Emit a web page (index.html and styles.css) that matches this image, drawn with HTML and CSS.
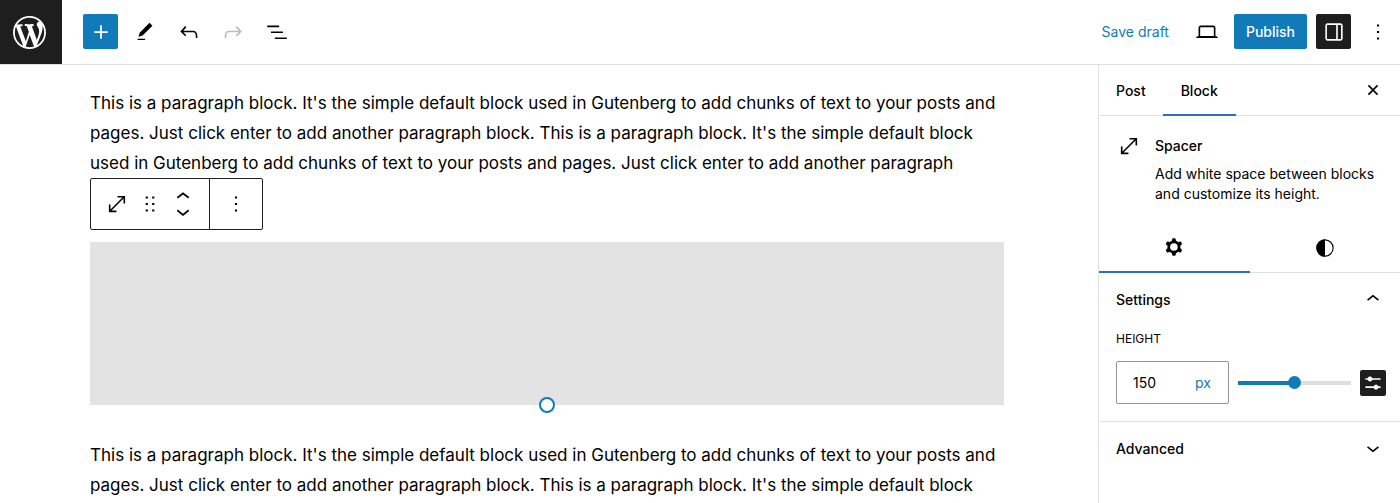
FILE: index.html
```html
<!DOCTYPE html>
<html lang="en">
<head>
    <meta charset="UTF-8">
    <title>Edit Post</title>
    <link rel="stylesheet" href="styles.css">
</head>
<body>
    <header class="header">
        <a href="#" class="site-logo" aria-label="View Posts">
            <svg viewBox="0 0 20 20"><path d="M20 10c0-5.51-4.49-10-10-10C4.48 0 0 4.49 0 10c0 5.52 4.48 10 10 10 5.51 0 10-4.48 10-10zM7.78 15.37L4.37 6.22c.55-.02 1.17-.08 1.17-.08.5-.06.44-1.13-.06-1.11 0 0-1.45.11-2.37.11-.18 0-.37 0-.58-.01C4.12 2.69 6.87 1.11 10 1.11c2.33 0 4.45.87 6.05 2.34-.68-.11-1.65.39-1.65 1.58 0 .74.45 1.36.9 2.1.35.61.55 1.36.55 2.46 0 1.49-1.4 5-1.4 5l-3.03-8.37c.54-.02.82-.17.82-.17.5-.05.44-1.25-.06-1.22 0 0-1.44.12-2.38.12-.87 0-2.33-.12-2.33-.12-.5-.03-.56 1.2-.06 1.22l.92.08 1.26 3.41zM17.41 10c.24-.64.74-1.87.43-4.25.7 1.29 1.05 2.71 1.05 4.25 0 3.29-1.73 6.24-4.4 7.78.97-2.59 1.94-5.2 2.92-7.78zM6.1 18.09C3.12 16.65 1.11 13.53 1.11 10c0-1.3.23-2.48.72-3.59C3.25 10.3 4.67 14.2 6.1 18.09zm4.03-6.63l2.58 6.98c-.86.29-1.76.45-2.71.45-.79 0-1.57-.11-2.29-.33.81-2.38 1.62-4.74 2.42-7.1z"/></svg>
        </a>
        <div class="header-tools">
            <button type="button" class="icon-button primary" aria-label="Add block">
                <svg class="icon icon-large" viewBox="0 0 24 24"><path d="M11.25 12.75v5h1.5v-5h5v-1.5h-5v-5h-1.5v5h-5v1.5z"/></svg>
            </button>
            <button type="button" class="icon-button" aria-label="Tools">
                <svg class="icon icon-small" viewBox="0 0 24 24"><path d="M20.1 5.1L16.9 2 6.2 12.7l-1.3 4.4 4.5-1.3L20.1 5.1zM4 20.8h8v-1.5H4v1.5z"/></svg>
            </button>
            <button type="button" class="icon-button" aria-label="Undo">
                <svg class="icon" viewBox="0 0 24 24"><path d="M18.3 11.7c-.6-.6-1.4-.9-2.3-.9H6.7l2.9-3.3-1.1-1-4.5 5L8.5 16l1-1-2.7-2.7H16c.5 0 .9.2 1.3.5 1 1 1 3.4 1 4.5v.3h1.5v-.2c0-1.5 0-4.3-1.5-5.7z"/></svg>
            </button>
            <button type="button" class="icon-button" aria-label="Redo" disabled>
                <svg class="icon" viewBox="0 0 24 24"><path d="M15.6 6.5l-1.1 1 2.9 3.3H8c-.9 0-1.7.3-2.3.9-1.4 1.5-1.4 4.2-1.4 5.6v.2h1.5v-.3c0-1.1 0-3.5 1-4.5.3-.3.7-.5 1.3-.5h9.2L14.5 15l1.1 1.1 4.6-4.6-4.6-5z"/></svg>
            </button>
            <button type="button" class="icon-button" aria-label="Document overview">
                <svg class="icon" viewBox="0 0 24 24"><path d="M3 6h11v1.5H3V6Zm3.5 5.5h11V13h-11v-1.5ZM21 17H10v1.5h11V17Z"/></svg>
            </button>
        </div>
        <div class="header-settings">
            <button type="button" class="save-draft">Save draft</button>
            <button type="button" class="icon-button view" aria-label="View">
                <svg class="icon" viewBox="0 0 24 24"><path d="M20.5 16h-.7V8c0-1.1-.9-2-2-2H6.2c-1.1 0-2 .9-2 2v8h-.7c-.8 0-1.5.7-1.5 1.5h20c0-.8-.7-1.5-1.5-1.5zM5.7 8c0-.3.2-.5.5-.5h11.6c.3 0 .5.2.5.5v7.6H5.7V8z"/></svg>
            </button>
            <button type="button" class="publish">Publish</button>
            <button type="button" class="icon-button pressed" aria-label="Settings">
                <svg class="icon" viewBox="0 0 24 24"><path d="M18 4H6c-1.1 0-2 .9-2 2v12c0 1.1.9 2 2 2h12c1.1 0 2-.9 2-2V6c0-1.1-.9-2-2-2zm-4 14.5H6c-.3 0-.5-.2-.5-.5V6c0-.3.2-.5.5-.5h8v13zm4.5-.5c0 .3-.2.5-.5.5h-2.5v-13H18c.3 0 .5.2.5.5v12z"/></svg>
            </button>
            <button type="button" class="icon-button" aria-label="Options">
                <svg class="icon" viewBox="0 0 24 24"><path d="M13 19h-2v-2h2v2zm0-6h-2v-2h2v2zm0-6h-2V5h2v2z"/></svg>
            </button>
        </div>
    </header>

    <div class="layout">
        <main class="canvas">
            <p>This is a paragraph block. It's the simple default block used in Gutenberg to add chunks of text to your posts and pages. Just click enter to add another paragraph block. This is a paragraph block. It's the simple default block used in Gutenberg to add chunks of text to your posts and pages. Just click enter to add another paragraph</p>

            <div class="block-toolbar">
                <div class="toolbar-group">
                    <button type="button" class="toolbar-button" aria-label="Spacer">
                        <svg class="icon" viewBox="0 0 24 24"><path d="M7 18h4.5v1.5h-7v-7H6V17L17 6h-4.5V4.5h7v7H18V7L7 18Z"/></svg>
                    </button>
                    <button type="button" class="toolbar-button" aria-label="Drag">
                        <svg class="icon" viewBox="0 0 24 24"><path d="M8 7h2V5H8v2zm0 6h2v-2H8v2zm0 6h2v-2H8v2zm6-14v2h2V5h-2zm0 8h2v-2h-2v2zm0 6h2v-2h-2v2z"/></svg>
                    </button>
                    <div class="movers">
                        <button type="button" class="mover" aria-label="Move up">
                            <svg viewBox="6 7 12 8"><path d="M6.5 12.4L12 8l5.5 4.4-.9 1.2L12 10l-4.5 3.6-1-1.2z"/></svg>
                        </button>
                        <button type="button" class="mover" aria-label="Move down">
                            <svg viewBox="6 9 12 8"><path d="M17.5 11.6L12 16l-5.5-4.4.9-1.2L12 14l4.5-3.6 1 1.2z"/></svg>
                        </button>
                    </div>
                </div>
                <div class="toolbar-group">
                    <button type="button" class="toolbar-button" aria-label="Options">
                        <svg class="icon" viewBox="0 0 24 24"><path d="M13 19h-2v-2h2v2zm0-6h-2v-2h2v2zm0-6h-2V5h2v2z"/></svg>
                    </button>
                </div>
            </div>

            <div class="spacer">
                <span class="resize-handle"></span>
            </div>

            <p>This is a paragraph block. It's the simple default block used in Gutenberg to add chunks of text to your posts and pages. Just click enter to add another paragraph block. This is a paragraph block. It's the simple default block</p>
        </main>

        <aside class="sidebar">
            <div class="sidebar-tabs">
                <button type="button" class="tab">Post</button>
                <button type="button" class="tab active">Block</button>
                <button type="button" class="close" aria-label="Close settings">
                    <svg class="icon" viewBox="0 0 24 24"><path d="M12 13.06l3.712 3.713 1.061-1.06L13.061 12l3.712-3.712-1.06-1.06L12 10.938 8.288 7.227l-1.061 1.06L10.939 12l-3.712 3.712 1.06 1.061L12 13.061z"/></svg>
                </button>
            </div>

            <div class="block-card">
                <svg class="icon" viewBox="0 0 24 24"><path d="M7 18h4.5v1.5h-7v-7H6V17L17 6h-4.5V4.5h7v7H18V7L7 18Z"/></svg>
                <div>
                    <h2>Spacer</h2>
                    <p>Add white space between blocks and customize its height.</p>
                </div>
            </div>

            <div class="inspector-tabs">
                <button type="button" class="inspector-tab active" aria-label="Settings">
                    <svg class="icon" viewBox="0 0 24 24"><path fill-rule="evenodd" d="M10.289 4.836A1 1 0 0111.275 4h1.306a1 1 0 01.987.836l.244 1.466c.787.26 1.503.679 2.108 1.218l1.393-.522a1 1 0 011.216.437l.653 1.13a1 1 0 01-.23 1.273l-1.148.944a6.025 6.025 0 010 2.435l1.149.946a1 1 0 01.23 1.272l-.653 1.13a1 1 0 01-1.216.437l-1.394-.522c-.605.54-1.32.958-2.108 1.218l-.244 1.466a1 1 0 01-.987.836h-1.306a1 1 0 01-.986-.836l-.244-1.466a5.995 5.995 0 01-2.108-1.218l-1.394.522a1 1 0 01-1.217-.436l-.653-1.131a1 1 0 01.23-1.272l1.149-.946a6.026 6.026 0 010-2.435l-1.148-.944a1 1 0 01-.23-1.272l.653-1.131a1 1 0 011.217-.437l1.393.522a5.994 5.994 0 012.108-1.218l.244-1.466zM15.4 12a3.5 3.5 0 11-7 0 3.5 3.5 0 017 0z"/></svg>
                </button>
                <button type="button" class="inspector-tab" aria-label="Styles">
                    <svg class="icon" viewBox="0 0 24 24"><circle cx="12" cy="12" r="7.5" fill="none" stroke="currentColor"/><path d="M12 4a8 8 0 0 0 0 16z"/></svg>
                </button>
            </div>

            <section class="panel">
                <button type="button" class="panel-toggle" aria-expanded="true">
                    Settings
                    <svg class="icon" viewBox="0 0 24 24"><path d="M6.5 12.4L12 8l5.5 4.4-.9 1.2L12 10l-4.5 3.6-1-1.2z"/></svg>
                </button>
                <label class="field-label" for="height">Height</label>
                <div class="height-control">
                    <div class="unit-input">
                        <input type="text" id="height" value="150">
                        <button type="button" class="unit" aria-label="Select unit">px</button>
                    </div>
                    <input type="range" class="slider" min="0" max="300" value="150" aria-label="Height">
                    <button type="button" class="custom-size" aria-label="Use size preset">
                        <svg class="icon" viewBox="0 0 24 24"><path d="m19 7.5h-7.628c-.309-.874-1.142-1.5-2.122-1.5-.98 0-1.813.626-2.122 1.5h-2.128v1.5h2.128c.309.874 1.142 1.5 2.122 1.5.98 0 1.813-.626 2.122-1.5h7.628z"/><path d="m19 15h-2.128c-.309-.874-1.142-1.5-2.122-1.5s-1.813.626-2.122 1.5h-7.628v1.5h7.628c.309.874 1.142 1.5 2.122 1.5s1.813-.626 2.122-1.5h2.128z"/></svg>
                    </button>
                </div>
            </section>

            <section class="panel">
                <button type="button" class="panel-toggle" aria-expanded="false">
                    Advanced
                    <svg class="icon" viewBox="0 0 24 24"><path d="M17.5 11.6L12 16l-5.5-4.4.9-1.2L12 14l4.5-3.6 1 1.2z"/></svg>
                </button>
            </section>
        </aside>
    </div>
</body>
</html>
```
FILE: styles.css
```css
* {
    box-sizing: border-box;
}
body {
    margin: 0;
    height: 100vh;
    display: flex;
    flex-direction: column;
    overflow: hidden;
    font-family: Inter, sans-serif;
    font-size: 14px;
    color: #000;
    background: #fff;
}
button {
    margin: 0;
    padding: 0;
    border: none;
    background: none;
    color: inherit;
    font: inherit;
    cursor: pointer;
}
svg {
    display: block;
    fill: currentColor;
    flex: none;
}
.icon {
    width: 26px;
    height: 26px;
}
.icon-large {
    width: 28px;
    height: 28px;
}
.icon-small {
    width: 22px;
    height: 22px;
}

/* Header */
.header {
    display: flex;
    align-items: center;
    flex: none;
    border-bottom: 1px solid #e0e0e0;
}
.site-logo {
    display: flex;
    align-items: center;
    justify-content: center;
    width: 62px;
    height: 64px;
    padding-right: 3px;
    background: #1e1e1e;
    color: #fff;
}
.site-logo svg {
    width: 33px;
    height: 33px;
}
.header-tools {
    display: flex;
    gap: 9px;
    margin-left: 21px;
    padding-bottom: 1px;
}
.header-settings {
    display: flex;
    align-items: center;
    gap: 9px;
    margin-left: auto;
    padding: 0 5px 1px 0;
}
.icon-button {
    display: flex;
    align-items: center;
    justify-content: center;
    width: 35px;
    height: 35px;
    border-radius: 2px;
}
.icon-button:disabled {
    color: #bbb;
}
.primary, .publish {
    background: #117ab9;
    color: #fff;
}
.pressed {
    background: #1e1e1e;
    color: #fff;
}
.save-draft {
    color: #117ab9;
    margin-right: 12px;
}
.publish {
    height: 35px;
    padding: 0 12px;
    border-radius: 2px;
    font-weight: 500;
}

/* Canvas */
.layout {
    display: flex;
    flex: 1;
    min-height: 0;
}
.canvas {
    flex: 1;
    min-width: 0;
    padding: 23px 94px 0 90px;
    overflow: hidden;
}
.canvas p {
    margin: 0;
    font-size: 17px;
    line-height: 30px;
}
.block-toolbar {
    display: flex;
    width: max-content;
    height: 52px;
    border: 1px solid #1e1e1e;
    border-radius: 2px;
}
.toolbar-group {
    display: flex;
    align-items: center;
    gap: 1px;
    padding: 0 10px;
}
.toolbar-group + .toolbar-group {
    border-left: 1px solid #1e1e1e;
}
.toolbar-button {
    display: flex;
    justify-content: center;
    width: 32px;
}
.movers {
    display: flex;
    flex-direction: column;
    align-items: center;
    gap: 8px;
    width: 32px;
}
.mover svg {
    width: 14px;
    height: 9px;
}
.spacer {
    position: relative;
    height: 163px;
    margin: 12px 0 35px;
    background: #e3e3e3;
}
.resize-handle {
    position: absolute;
    left: 50%;
    bottom: 0;
    width: 16px;
    height: 16px;
    transform: translate(-50%, 50%);
    border: 2px solid #117ab9;
    border-radius: 50%;
    background: #fff;
}

/* Sidebar */
.sidebar {
    flex: none;
    width: 302px;
    border-left: 1px solid #e0e0e0;
}
.sidebar-tabs {
    display: flex;
    height: 51px;
    border-bottom: 1px solid #e0e0e0;
}
.tab {
    height: 51px;
    padding: 0 17px;
    font-weight: 500;
}
.active {
    border-bottom: 2px solid #2f6fb7;
}
.tab.active {
    padding: 2px 18px 0;
}
.close {
    margin-left: auto;
    padding-right: 14px;
}
.block-card {
    display: flex;
    gap: 13px;
    padding: 17px 17px 0;
}
.block-card h2 {
    margin: 3px 0 8px;
    font-size: 14px;
    line-height: 20px;
    font-weight: 500;
}
.block-card p {
    margin: 0;
    line-height: 20px;
}
.inspector-tabs {
    display: flex;
    height: 51px;
    margin-top: 18px;
    border-bottom: 1px solid #e0e0e0;
}
.inspector-tab {
    display: flex;
    flex: 1;
    align-items: center;
    justify-content: center;
    height: 51px;
}
.panel {
    padding: 0 14px 0 17px;
    border-bottom: 1px solid #e0e0e0;
}
.panel:last-child {
    border-bottom: none;
}
.panel-toggle {
    display: flex;
    align-items: center;
    justify-content: space-between;
    width: 100%;
    height: 52px;
    font-weight: 500;
}
.field-label {
    display: block;
    margin: 5px 0 13px;
    font-size: 12px;
    line-height: 18px;
    text-transform: uppercase;
}
.height-control {
    display: flex;
    align-items: center;
    gap: 9px;
    padding-bottom: 17px;
}
.unit-input {
    display: flex;
    align-items: center;
    width: 113px;
    height: 43px;
    padding: 0 17px 0 16px;
    border: 1px solid #949494;
    border-radius: 2px;
}
.unit-input input {
    flex: 1;
    min-width: 0;
    padding: 0;
    border: none;
    outline: none;
    color: inherit;
    font: inherit;
}
.unit {
    color: #117ab9;
}
.slider {
    flex: 1;
    min-width: 0;
    height: 13px;
    margin: 0;
    appearance: none;
    border-radius: 2px;
    background: linear-gradient(to right, #117ab9 50%, #ddd 50%) center / 100% 4px no-repeat;
}
.slider::-webkit-slider-thumb {
    appearance: none;
    width: 13px;
    height: 13px;
    border-radius: 50%;
    background: #117ab9;
}
.custom-size {
    background: #1e1e1e;
    color: #fff;
    border-radius: 2px;
}
```
